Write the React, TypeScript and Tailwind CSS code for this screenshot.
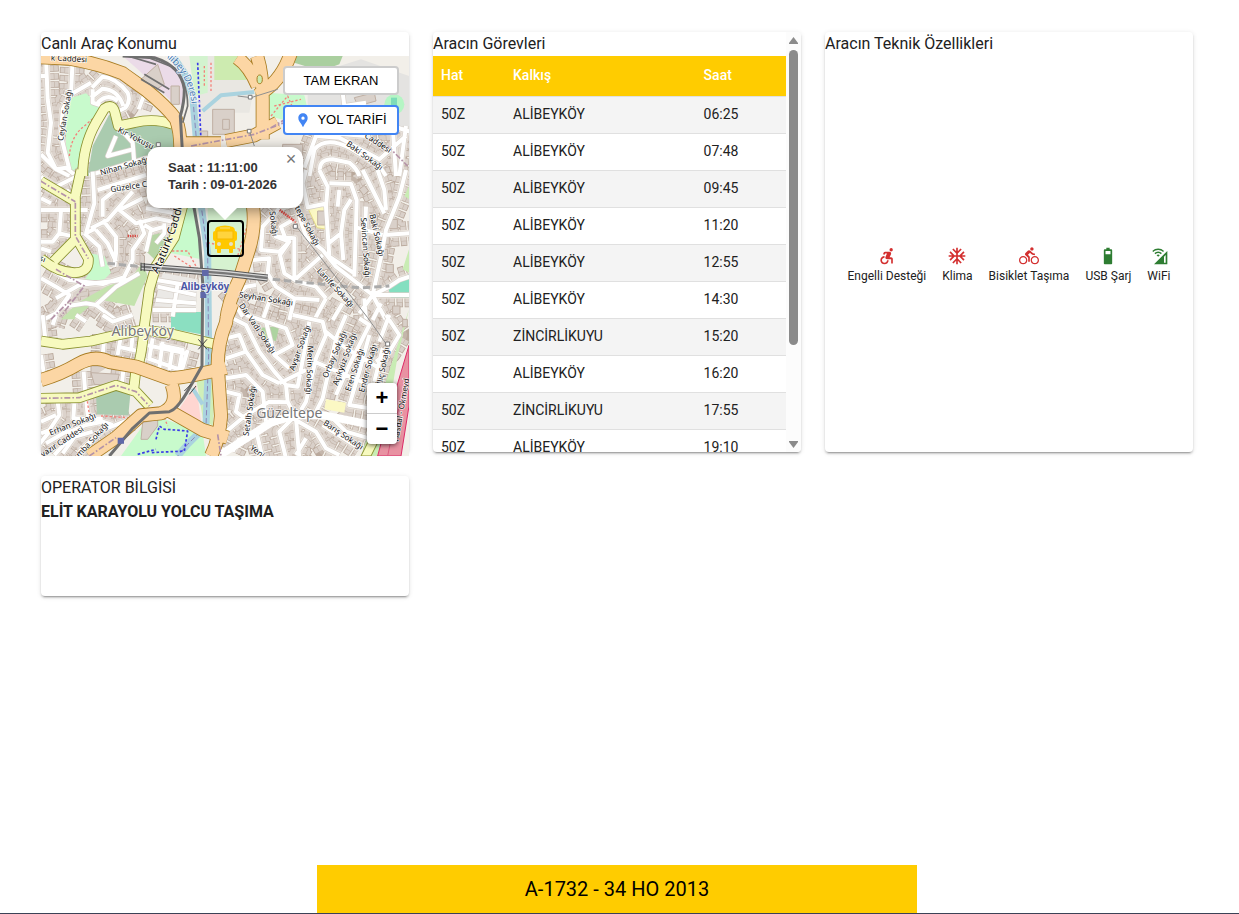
import {
  MdAcUnit,
  MdAccessibleForward,
  MdBattery5Bar,
  MdCellWifi,
  MdDirectionsBike,
  MdLocationPin,
} from "react-icons/md";

const trips = [
  ["50Z", "ALİBEYKÖY", "06:25"],
  ["50Z", "ALİBEYKÖY", "07:48"],
  ["50Z", "ALİBEYKÖY", "09:45"],
  ["50Z", "ALİBEYKÖY", "11:20"],
  ["50Z", "ALİBEYKÖY", "12:55"],
  ["50Z", "ALİBEYKÖY", "14:30"],
  ["50Z", "ZİNCİRLİKUYU", "15:20"],
  ["50Z", "ALİBEYKÖY", "16:20"],
  ["50Z", "ZİNCİRLİKUYU", "17:55"],
  ["50Z", "ALİBEYKÖY", "19:10"],
  ["50Z", "ZİNCİRLİKUYU", "20:30"],
  ["50Z", "ALİBEYKÖY", "21:45"],
  ["50Z", "ZİNCİRLİKUYU", "23:00"],
];

const features = [
  { name: "Engelli Desteği", icon: MdAccessibleForward, color: "text-[#d32f2f]" },
  { name: "Klima", icon: MdAcUnit, color: "text-[#d32f2f]" },
  { name: "Bisiklet Taşıma", icon: MdDirectionsBike, color: "text-[#d32f2f]" },
  { name: "USB Şarj", icon: MdBattery5Bar, color: "text-[#2e7d32]" },
  { name: "WiFi", icon: MdCellWifi, color: "text-[#2e7d32]" },
];

const card =
  "rounded bg-white shadow-[0_3px_1px_-2px_rgba(0,0,0,0.2),0_2px_2px_0_rgba(0,0,0,0.14),0_1px_5px_0_rgba(0,0,0,0.12)]";

// side streets, one entry per map tile
const streets = [
  {
    at: "translate(-15 -90)",
    d: "M30 95L35 220L45 290L35 380L60 430L100 450M110 100L105 205L80 250L75 330L100 430M105 205L165 170M15 150L35 150M168 185L200 152Q240 155 275 200Q285 225 268 245L235 262M165 215L200 188Q245 190 262 240M170 190L170 230L200 240M185 230Q215 200 245 225M325 205L308 250M245 300L290 350L295 410M160 448L335 395M15 385L60 430L90 425L120 450M240 330L215 390L290 370",
  },
  {
    at: "translate(555 -90)",
    d: "M235 425L270 330L340 335L460 400L540 330M250 450L265 370Q300 330 370 365L460 420L480 450M285 450Q270 400 320 400L370 410Q395 430 400 450M350 200L355 240L420 230M430 310L500 300L560 320M500 300L510 450M540 300L520 450M300 320L420 330",
  },
  {
    at: "translate(-15 342)",
    d: "M170 5L175 100L150 190M185 60L330 15M200 140L200 90L235 62L340 40M290 65L215 150L165 175M320 85L250 120L300 160L360 145L410 155M330 115L410 128M310 150L325 190L290 240L290 270L260 330L130 345L60 385M345 180L330 245M385 160L385 190L360 220M325 165L350 180L385 170M145 190L190 230L200 290M180 180L215 220L240 275M200 150L240 200L240 250L235 290M150 190L180 175M15 215L50 215L70 190L115 200M15 120L75 120L70 190M75 120L155 120M30 55L75 80L100 60M15 85L45 100M15 325L60 350L100 375L60 430L20 450M55 305L100 330L200 342L270 320M100 375L80 410L150 400L180 405L240 450M180 405L240 350L310 310M360 330L485 350M365 350L480 375M360 390L480 400M425 340L410 440M350 420L480 420M15 20L60 50L130 15M15 235L45 245",
  },
  {
    at: "translate(555 342)",
    d: "M280 0L305 50L300 110L310 260M310 40L375 42L392 90L390 170L385 320M305 100L245 112L230 40L240 0M540 0L520 80L480 180L465 260L440 375M410 0L440 60L475 130M455 0L475 60L480 120M375 88L355 120L345 190L352 270M345 190L310 218M210 110L240 200L290 240L330 290L440 375L480 450M160 115L110 170L105 240L160 245L190 215L150 200L205 205L205 330M190 215L162 255L175 310L215 335L270 350L300 385M205 330L250 290L290 255M80 270L130 265L125 310L150 350L205 385L280 390M310 260L385 310M390 172L470 195M440 375L490 350L520 330L550 320M440 375L550 375M440 375L400 430M415 385L420 450M465 400L440 450M0 405L60 350L90 345M20 390L50 440M135 380L110 450M300 385L265 450M350 400L320 450M205 385L190 450M420 110L415 240M475 195L550 190M340 60L335 110M180 210L165 170L200 150",
  },
  {
    at: "translate(-15 777)",
    d: "M20 0L30 90M205 60L200 125M255 60L245 120M245 95L305 108M290 60L285 110M370 90L440 105L430 160M350 70L340 130M380 80L370 160M410 95L400 165M335 130L435 165M455 105L435 175M330 90L450 115M15 120L25 185M143 170L148 235M262 165L258 205M65 260L70 300L40 345L15 355M115 265L112 310L160 312L200 310M150 250L155 300L200 320M15 320L60 300M90 355L150 330L200 320L230 330M30 385L90 350L130 345L80 415M130 410L200 345L290 310M55 420L100 370L170 350M0 400L40 350M60 0L50 30M200 0L230 20L290 0M120 0L150 20",
  },
  {
    at: "translate(555 777)",
    d: "M0 0L60 30L100 110L145 170L180 210L185 260L210 310L220 430M60 0L180 40L200 90L145 120L190 160M120 20L145 120M200 0L290 20L300 60L270 130L240 260L225 285M180 210L215 215L235 110L250 20M300 50L360 100L460 160M360 0L330 70L290 250L270 290M400 10L430 30L370 150L330 240M430 60L400 170L370 270L430 280M470 100L445 200M265 140L430 210M0 190L60 180L110 230L120 320M0 230L40 240L30 290L70 320L60 370M0 130L60 110L110 180L160 205M60 110L40 60L0 70M200 310L160 350L180 430M200 310L270 350L300 400L340 420M320 310L360 350L430 370M290 330L400 400M0 350L60 300L130 260L185 262M90 345L110 430M20 410L40 370M480 0L520 60L490 110L450 140M240 370L210 420M490 0L460 80M240 165L160 205",
  },
];

const orangeRoads =
  "M0 4L85 8Q170 22 245 52L315 102Q375 150 405 190Q420 230 418 290M648 0Q665 50 665 130V250M750 -10Q720 80 648 118M588 5Q625 30 650 90M418 262L540 262M555 255L640 238L710 200M636 450Q645 520 620 592L595 670Q560 740 555 800Q530 860 530 930L540 1080Q535 1150 510 1200M0 972Q60 955 110 925T205 918L285 932L385 968Q460 960 555 935M392 985Q415 1050 360 1072L300 1078L225 1145L145 1200M385 1065L485 1122L560 1145M555 790L575 740";

const yellowRoads =
  "M125 360Q125 270 165 200L190 158Q215 140 222 170L232 210L280 200Q340 185 395 205M120 342L103 420V540L142 608Q145 650 100 650Q50 650 0 608M38 616L103 550M0 376L103 437M425 450L400 545L345 630L325 700L310 810Q300 920 285 940L278 1002M0 855L65 865L150 855L215 840L305 822L385 832L525 865M0 1027L115 1025L225 988L285 1007L325 1050";

const railway =
  "M245 0L340 5Q420 30 430 100Q430 140 418 180L425 300L460 460L475 545L485 680L483 930L445 997Q410 1060 385 1067L325 1071L275 1117L205 1200";

const stream =
  "M395 0L430 50L455 120L467 260L482 460L500 590L503 900L495 1110L440 1165L410 1200";

const labels = [
  { x: 73, y: 178, r: -80, text: "Ceylan Sokağı" },
  { x: 84, y: 10, r: 3, text: "k Caddesi" },
  { x: 284, y: 248, r: 27, text: "Kır Yokuşu" },
  { x: 250, y: 332, r: -16, text: "Nihan Sokağı" },
  { x: 300, y: 388, r: -9, text: "Güzelce Caddesi" },
  { x: 1010, y: 262, r: 33, text: "Caddesi" },
  { x: 970, y: 300, r: 36, text: "Baki Sokağı" },
  { x: 1006, y: 538, r: 77, text: "Baki Sokağı" },
  { x: 972, y: 575, r: 86, text: "Sevincan Sokağı" },
  { x: 797, y: 510, r: 62, text: "tepe Sokağı" },
  { x: 696, y: 503, r: 84, text: "Sokağı" },
  { x: 882, y: 696, r: 47, text: "Lanife Sokağı" },
  { x: 675, y: 730, r: 9, text: "Seyhan Sokağı" },
  { x: 648, y: 818, r: 56, text: "Dar Vadi Sokağı" },
  { x: 778, y: 876, r: -70, text: "Avşar Sokağı" },
  { x: 804, y: 942, r: 92, text: "Metin Sokağı" },
  { x: 882, y: 896, r: -67, text: "Orbay Sokağı" },
  { x: 912, y: 910, r: -70, text: "Açıkyüz Sokağı" },
  { x: 942, y: 942, r: -72, text: "Eren Sokağı" },
  { x: 982, y: 937, r: -75, text: "Ender Sokağı" },
  { x: 1028, y: 930, r: -79, text: "İliç Sokağı" },
  { x: 627, y: 1065, r: -82, text: "Setalh Sokağı" },
  { x: 906, y: 1138, r: 34, text: "Barış Sokağı" },
  { x: 648, y: 1188, r: 36, text: "Yeni" },
  { x: 1082, y: 1062, r: -80, text: "Hasdal - Okmeyd" },
  { x: 95, y: 1106, r: -21, text: "Erhan Sokağı" },
  { x: 64, y: 1158, r: -33, text: "yazır Caddesi" },
  { x: 155, y: 1152, r: -48, text: "mba Sokağı" },
  { x: 4, y: 610, r: 20, text: "şı" },
];

function StreetMap() {
  return (
    <svg
      viewBox="0 0 1104 1200"
      preserveAspectRatio="xMidYMid slice"
      className="h-full w-full"
      fill="none"
      strokeLinejoin="round"
      strokeLinecap="butt"
      aria-label="Harita"
    >
      <defs>
        <path id="ataturk" d="M342 650Q378 575 398 510T442 350" />
        <path id="dere" d="M372 -10Q425 30 445 80T462 200" />
      </defs>
      <rect width="1104" height="1200" fill="#f2efe9" />

      {/* building blocks along the streets */}
      {streets.map(({ at, d }) => (
        <g key={at} transform={at}>
          <path d={d} stroke="#b9a89b" strokeWidth="74" strokeDasharray="19 5" />
          <path d={d} stroke="#d9d0c9" strokeWidth="69" strokeDasharray="15 9" strokeDashoffset="-2" />
          <path d={d} stroke="#c4b6ab" strokeWidth="46" strokeDasharray="19 5" />
          <path d={d} stroke="#dcd3cc" strokeWidth="42" strokeDasharray="15 9" strokeDashoffset="-2" />
          <path d={d} stroke="#ece6df" strokeWidth="21" />
        </g>
      ))}

      {/* parks and land use */}
      <path d="M75 130L135 112L190 160L150 210L125 320L90 350L75 270Z" fill="#c8facc" />
      <path d="M205 175L230 215Q330 190 400 215L420 300L330 320L140 360L155 270Z" fill="#aacbaf" />
      <path d="M245 0L345 0L430 60L425 150L385 130L290 40Z" fill="#ebdbe8" />
      <path d="M450 0H590L640 90L625 170H575L540 260H460L470 120Z" fill="#e9e7e2" />
      <path d="M445 0H500V110L460 120Z" fill="#d3f3cf" />
      <path d="M520 0H590L625 60L615 72H520Z" fill="#cdebb0" />
      <path d="M755 0H905L895 25L840 45L760 20Z" fill="#aacf9f" />
      <path d="M800 60L960 10L1104 60V220L960 240L800 200Z" fill="#e4e3e1" />
      <path d="M680 110L790 118L800 160L740 195L685 180Z" fill="#c8facc" />
      <circle cx="1060" cy="145" r="30" fill="#b5f5c4" />
      <path d="M1050 125h18v34h-18z" fill="#7ddcb8" />
      <path d="M430 450H465L480 610L385 590Z" fill="#c8facc" />
      <path d="M500 440H620L600 660L500 650Z" fill="#d6f2d0" />
      <path d="M145 592L190 600L210 650L180 680L120 690L95 735L150 640Z" fill="#c8facc" />
      <path d="M110 740L200 690L270 665L305 620L320 660L280 750L170 730L100 790L60 790Z" fill="#c4e3ae" />
      <path d="M320 540L365 530L385 560L340 610L310 580Z" fill="#b6d5a5" />
      <path d="M390 768H480V835L390 818Z" fill="#8bdfc1" />
      <path d="M365 650L470 670L465 760L340 750Z" fill="#ebe9e6" />
      <path d="M165 1018L220 995L268 1015L262 1078L168 1075Z" fill="#aacbaf" />
      <path d="M330 1075L485 1130L495 1200H240Z" fill="#c8facc" />
      <path d="M412 1062L465 985L482 1110Z" fill="#ffd6d1" />
      <path d="M465 965L525 968L515 1110L485 1085Z" fill="#d0efb9" />
      <path d="M800 455L850 450L857 520L828 515Z" fill="#fbf8c4" stroke="#e5dc8a" strokeWidth="3" />
      <path d="M830 465h22v42h-22z" fill="#d9d0c9" stroke="#bfafa3" strokeWidth="3" />
      <path d="M660 815L715 810L705 855L670 850Z" fill="#add3a0" />
      <path d="M855 1030L915 1040L910 1070L850 1060Z" fill="#fbf8c4" />
      <path d="M1040 690L1104 655V725L1050 725Z" fill="#84dfc0" />
      <path d="M1104 580L1085 640L1104 650ZM1104 390L1090 420L1104 430ZM1104 760L1070 900L1020 1200H960L1040 960Z" fill="#c9ecb4" />

      {/* larger buildings */}
      <g fill="#d9d0c9" stroke="#bfafa3" strokeWidth="3">
        <path d="M515 160H580V235H515ZM545 190H565V220H545ZM730 170H790V215H730ZM300 70L350 25L370 85L330 110ZM390 90H415V145H390ZM150 950L235 955L225 990L160 985ZM460 255H500V225H460ZM150 965V930H205M305 1100L350 1090V1110L320 1150H300ZM855 180L930 170L925 200L860 205ZM940 125L1000 110L1005 135L950 150ZM870 55H905V75H870ZM725 265H785V300H725Z" />
        <path d="M1015 580h25v30h-25zM1020 535h25v30h-25zM1035 625h22v25h-22zM1045 490h24v28h-24zM955 400l15 -12l12 16l-14 14zM1055 750h22v24h-22zM1085 790h14v22h-14z" />
      </g>

      <path d={stream} stroke="#aad3df" strokeWidth="21" />
      <path d="M485 165L540 118L640 108M455 997L485 1045" stroke="#aad3df" strokeWidth="12" />
      <path d={stream} stroke="#8c86b8" strokeWidth="3" strokeDasharray="16 8" />

      {streets.map(({ at, d }) => (
        <g key={at} transform={at}>
          <path d={d} stroke="#d6cfc8" strokeWidth="16" />
          <path d={d} stroke="#fff" strokeWidth="12" />
        </g>
      ))}
      <path d="M540 1195L690 1100L760 1078H850L985 1105" stroke="#fff" strokeWidth="24" />

      {/* foot paths */}
      <path
        d="M85 300Q90 240 130 210L165 180M380 585H440L470 640M135 1010L145 1075M180 1080L260 1085M400 600L470 645M500 560L600 580M700 150L780 130M690 180L740 120L770 190M620 505L590 600M720 465L765 500M370 1085L380 1110M490 30V95M510 20V110"
        stroke="#f4827b"
        strokeWidth="4"
        strokeDasharray="7 6"
      />
      <path d="M470 20L480 255M345 1150L355 1110L370 1120L375 1120L440 1125L430 1185L330 1190M290 1195L345 1180" stroke="#3a3ae8" strokeWidth="5" strokeDasharray="8 6" />

      <path d={yellowRoads} stroke="#8a9130" strokeWidth="32" />
      <path d={yellowRoads} stroke="#f7fabf" strokeWidth="27" />
      <path d={orangeRoads} stroke="#a87c22" strokeWidth="42" />
      <path d={orangeRoads} stroke="#fcd6a4" strokeWidth="37" />
      <path
        d="M103 440V540L142 608M0 376L103 437M0 1027L115 1025L225 988L285 1007L325 1050M145 1200L225 1145M450 270L640 235L730 200M30 790L90 730M45 640L130 690L60 780M530 1135L540 1200M690 215L750 180M1040 270L1100 330"
        stroke="#b493a8"
        strokeWidth="5"
        strokeDasharray="18 6 5 6"
      />
      <ellipse cx="656" cy="70" rx="8" ry="13" fill="#cdebb0" stroke="#a87c22" strokeWidth="3" />

      <path d="M1104 868L1050 1050L1010 1200H1080L1104 1050Z" fill="#e892a2" stroke="#dc2a67" strokeWidth="3" />
      <path d="M1104 960L1060 1100L1040 1200" stroke="#dc5c80" strokeWidth="3" />
      <path d="M960 1200L985 1150L1010 1160L990 1200Z" fill="#f7fabf" stroke="#8a9130" strokeWidth="3" />

      {/* rail lines */}
      <path d={railway} stroke="#6f6f6f" strokeWidth="9" />
      <path d="M310 0L400 35Q440 80 440 150L425 200M260 0L345 25M300 70L370 110M310 55L385 100" stroke="#707070" strokeWidth="5" />
      <path d="M300 632L555 652L680 666" stroke="#555" strokeWidth="21" />
      <path d="M300 632L555 652L680 666" stroke="#d5d5d5" strokeWidth="15" />
      <path d="M300 632L555 652L680 666" stroke="#777" strokeWidth="7" />
      <path d="M200 622L300 632M695 670L960 696L1045 690" stroke="#aaa" strokeWidth="9" strokeDasharray="22 12" />
      <path d="M590 120L630 125L710 100M625 225L640 270M765 510L980 785L1040 870" stroke="#8f8f8f" strokeWidth="3" />
      <path d="M300 620V645M310 621V646M472 850L498 880M498 850L472 880M430 1005L450 985M445 1015L465 990" stroke="#444" strokeWidth="3" />
      <path d="M483 642h20v18h-20zM478 708h18v18h-18zM230 1145h19v18h-19z" fill="#6068a8" />
      <path
        d="M622 118h11v11h-11zM619 220h11v11h-11zM757 505h12v12h-12zM1034 858h12v12h-12zM346 260h12v12h-12z"
        fill="#fff"
        stroke="#777"
        strokeWidth="3"
      />
      <path d="M260 540H290M716 462L760 495" stroke="#d94b45" strokeWidth="8" strokeDasharray="4 3" />

      {/* labels */}
      <g
        fontFamily="'Noto Sans', sans-serif"
        fontSize="24"
        fill="#111"
        stroke="#fff"
        strokeOpacity="0.8"
        strokeWidth="5"
        paintOrder="stroke"
        textAnchor="middle"
        dominantBaseline="middle"
      >
        {labels.map(({ x, y, r, text }) => (
          <text key={`${text}${x}`} transform={`translate(${x} ${y}) rotate(${r})`}>
            {text}
          </text>
        ))}
        <text fontSize="33" textAnchor="start">
          <textPath href="#ataturk">Atatürk Caddesi</textPath>
        </text>
        <text fontSize="30" fill="#4d80b3" textAnchor="start">
          <textPath href="#dere">Alibey Deresi</textPath>
        </text>
        <text x="492" y="694" fontSize="30" fontWeight="700" fill="#4c56a5">
          Alibeyköy
        </text>
        <g fontSize="42" fill="#777">
          <text x="305" y="829">Alibeyköy</text>
          <text x="745" y="1076">Güzeltepe</text>
        </g>
      </g>
    </svg>
  );
}

function BusMarker() {
  return (
    <button
      type="button"
      aria-label="Araç konumu"
      className="grid h-[37px] w-[37px] place-items-center rounded border-2 border-black"
    >
      <svg viewBox="0 0 24 28" className="h-7 w-6">
        <path
          d="M4 2Q12-1 20 2Q22 3 22 6Q24 6 24 8V14Q24 16 22 16V24H20V27Q20 28 19 28H17Q16 28 16 27V24H8V27Q8 28 7 28H5Q4 28 4 27V24H2V16Q0 16 0 14V8Q0 6 2 6Q2 3 4 2Z"
          fill="#ffc800"
        />
        <path d="M7 3H17" stroke="#f3dc8a" strokeWidth="1" />
        <path d="M4 6H20V14H4Z" fill="#ffd43d" stroke="#f6b800" strokeWidth="1" />
        <circle cx="6" cy="19" r="2" fill="#e6e1c8" />
        <circle cx="18" cy="19" r="2" fill="#e6e1c8" />
      </svg>
    </button>
  );
}

function LiveMap() {
  const mapButton =
    "flex items-center justify-center rounded border-2 bg-white text-[13px] text-black";

  return (
    <div className="relative h-[400px] overflow-hidden font-['Liberation_Sans',sans-serif]">
      <StreetMap />

      <div className="absolute right-[10px] top-[10px] flex w-[116px] flex-col gap-[10px]">
        <button type="button" className={`${mapButton} h-[29px] border-[#ccc]`}>
          TAM EKRAN
        </button>
        <button type="button" className={`${mapButton} h-[30px] gap-[6px] border-[#4285f4]`}>
          <MdLocationPin className="text-base text-[#4285f4]" />
          YOL TARİFİ
        </button>
      </div>

      <div className="absolute left-1/2 top-[91px] flex -translate-x-1/2 flex-col items-center">
        <div className="relative w-[156px] rounded-xl bg-white px-[21px] pb-[15px] pt-3 text-[13px] font-bold leading-[17px] text-[#333] shadow-[0_3px_14px_rgba(0,0,0,0.4)]">
          <p>Saat : 11:11:00</p>
          <p className="whitespace-nowrap">Tarih : 09-01-2026</p>
          <button
            type="button"
            aria-label="Kapat"
            className="absolute right-0 top-0 h-6 w-6 text-lg font-normal leading-6 text-[#757575]"
          >
            ×
          </button>
        </div>
        <svg viewBox="0 0 24 12" className="relative h-3 w-6">
          <path d="M0 0H24L12 12Z" fill="#fff" />
        </svg>
        <BusMarker />
      </div>

      <div className="absolute bottom-3 right-3 flex w-[30px] flex-col rounded-sm bg-white text-[22px] font-bold leading-[30px] text-black shadow-[0_1px_5px_rgba(0,0,0,0.65)]">
        <button type="button" aria-label="Yakınlaştır" className="h-[31px] border-b border-[#ccc]">
          +
        </button>
        <button type="button" aria-label="Uzaklaştır" className="h-[30px]">
          −
        </button>
      </div>
    </div>
  );
}

function TripTable() {
  return (
    <div className="flex h-[420px] overflow-hidden rounded">
      <div className="h-full flex-1 overflow-y-auto [scrollbar-width:none]">
        <h2>Aracın Görevleri</h2>
        <table className="w-full table-fixed border-collapse text-left text-sm">
          <thead>
            <tr className="border-b border-[#e0e0e0] bg-[#fc0] leading-6 text-white">
              <th className="w-[72px] px-2 pb-[9px] pt-[7px] font-medium">Hat</th>
              <th className="w-[54%] px-2 pb-[9px] pt-[7px] font-medium">Kalkış</th>
              <th className="px-2 pb-[9px] pt-[7px] font-medium">Saat</th>
            </tr>
          </thead>
          <tbody>
            {trips.map(([line, stop, time]) => (
              <tr key={time} className="border-b border-[#e0e0e0] odd:bg-[#f4f4f4]">
                <td className="px-2 pb-[9px] pt-[7px]">{line}</td>
                <td className="px-2 pb-[9px] pt-[7px]">{stop}</td>
                <td className="px-2 pb-[9px] pt-[7px]">{time}</td>
              </tr>
            ))}
          </tbody>
        </table>
      </div>

      <div className="flex w-[15px] flex-col items-center gap-1 bg-[#fcfcfc] pb-1 pt-[5px]">
        <svg viewBox="0 0 9 7" className="h-[7px] w-[9px]">
          <path d="M4.500 0L9 6V7H0V6Z" fill="#8b8b8b" />
        </svg>
        <div className="flex-1">
          <div className="mt-[2px] h-[295px] w-[9px] rounded-full bg-[#8b8b8b]" />
        </div>
        <svg viewBox="0 0 9 7" className="h-[7px] w-[9px]">
          <path d="M4.500 7L9 1V0H0V1Z" fill="#8b8b8b" />
        </svg>
      </div>
    </div>
  );
}

export default function App() {
  return (
    <div className="flex min-h-screen flex-col bg-white font-[Roboto,sans-serif] text-base text-[#212121]">
      <main className="mx-auto w-full max-w-[1205px] flex-1 pl-6 pr-[29px] pt-8">
        <div className="grid grid-cols-1 gap-6 md:grid-cols-3">
          <section className={`${card} h-[420px]`}>
            <h2>Canlı Araç Konumu</h2>
            <LiveMap />
          </section>

          <section className={card}>
            <TripTable />
          </section>

          <section className={`${card} h-[420px]`}>
            <h2>Aracın Teknik Özellikleri</h2>
            <ul className="flex h-[420px] items-center justify-center gap-4">
              {features.map(({ name, icon: Icon, color }) => (
                <li key={name} className="flex flex-col items-center text-xs leading-5">
                  <Icon className={`h-5 w-5 ${color}`} />
                  {name}
                </li>
              ))}
            </ul>
          </section>

          <section className={`${card} h-[120px]`}>
            <h2>OPERATOR BİLGİSİ</h2>
            <p className="font-bold">ELİT KARAYOLU YOLCU TAŞIMA</p>
          </section>
        </div>
      </main>

      <footer className="border-b border-[#3b4256] pr-[5px]">
        <div className="mx-auto flex h-12 w-full max-w-[600px] items-center justify-center bg-[#fc0] text-xl text-black">
          A-1732 - 34 HO 2013
        </div>
      </footer>
    </div>
  );
}
